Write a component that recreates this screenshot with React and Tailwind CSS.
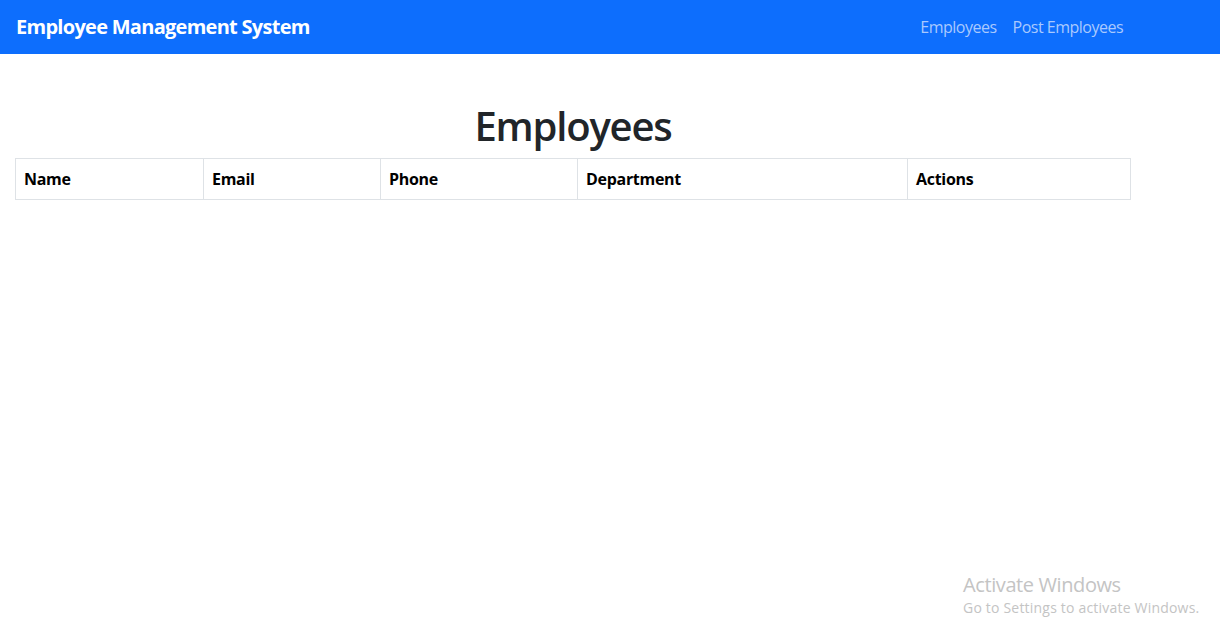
import React from 'react';

const columns = [
  { label: 'Name', w: 'w-[188px]' },
  { label: 'Email', w: 'w-[177px]' },
  { label: 'Phone', w: 'w-[197px]' },
  { label: 'Department', w: 'w-[330px]' },
  { label: 'Actions', w: '' },
];

export default function App() {
  return (
    <div className="relative min-h-[631px] bg-white font-['Open_Sans',sans-serif] text-[#212529]">
      {/* Navbar */}
      <nav className="h-[54px] bg-[#0d6efd] flex items-center justify-between pl-4 pr-[97px]">
        <span className="text-white text-[20px] font-bold tracking-[-0.72px]">Employee Management System</span>
        <div className="flex gap-4 text-[16px] text-[#a9c9fe] tracking-[-0.5px]">
          <a href="#">Employees</a>
          <a href="#">Post Employees</a>
        </div>
      </nav>

      <div className="ml-[15px] w-[1116px] pt-12">
        <h1 className="text-center text-[40px] leading-[48px] font-semibold tracking-[-1.2px] mb-2">Employees</h1>
        <table className="w-full border-collapse border border-[#dee2e6]">
          <thead>
            <tr>
              {columns.map((c) => (
                <th
                  key={c.label}
                  className={`${c.w} border border-[#dee2e6] px-2 py-[8px] h-[41px] text-left text-[16px] font-bold text-black tracking-[-0.3px]`}
                >
                  {c.label}
                </th>
              ))}
            </tr>
          </thead>
          <tbody></tbody>
        </table>
      </div>

      {/* Windows watermark */}
      <div className="absolute left-[963px] top-[572px] text-[#c4c4c4] leading-tight">
        <div className="text-[20px] tracking-[-0.4px]">Activate Windows</div>
        <div className="text-[14px] mt-[2px] tracking-[0.2px]">Go to Settings to activate Windows.</div>
      </div>
    </div>
  );
}
